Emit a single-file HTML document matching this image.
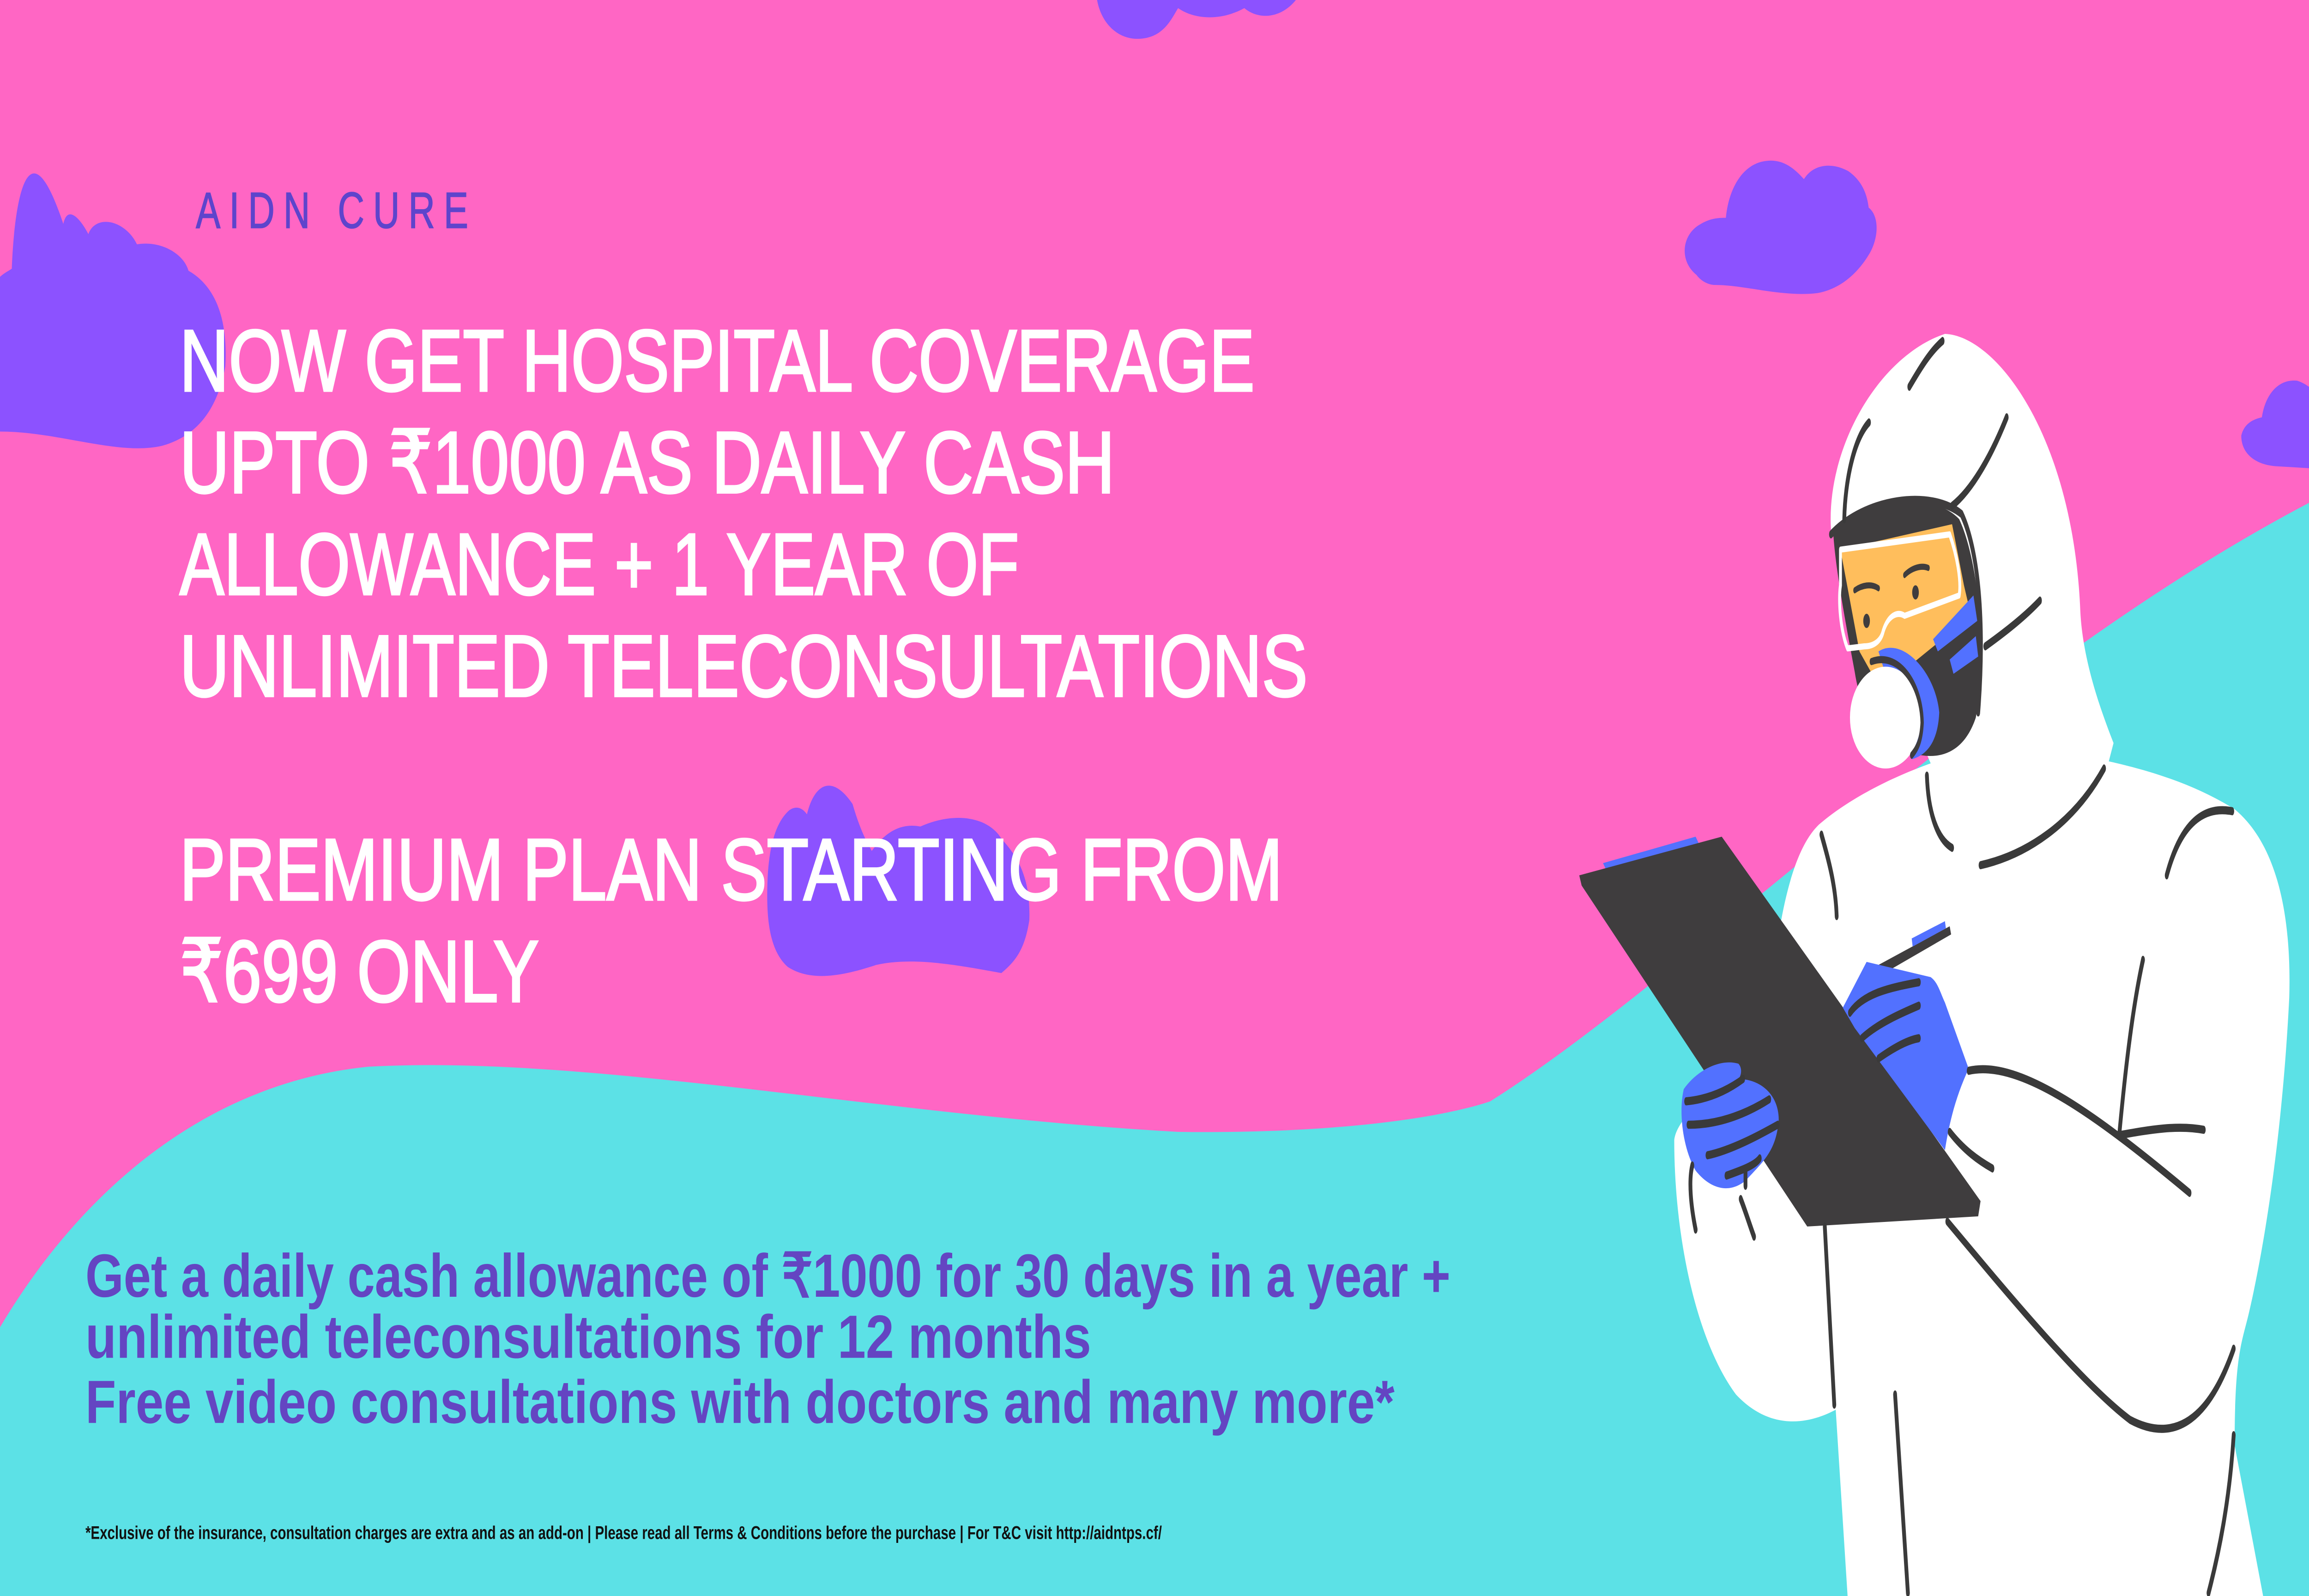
<!DOCTYPE html>
<html><head><meta charset="utf-8"><style>
html,body{margin:0;padding:0;width:100%;height:100%;overflow:hidden;background:#FF66C4}
svg{display:block;position:fixed;left:0;top:0;width:100vw;height:100vh}
</style></head><body>
<svg viewBox="0 0 1568 784" preserveAspectRatio="none" xmlns="http://www.w3.org/2000/svg">
<rect width="1568" height="784" fill="#FF66C4"/>
<path d="M745,0 C748,12 760,20 775,19 C790,18 795,10 800,4 C812,10 830,10 845,4 C855,10 870,9 880,0 Z" fill="#8C52FF"/>
<path d="M0,212 L0,136 C3,134 6,133 8,132 C10,95 20,60 43,110 C46,100 55,108 60,115 C65,105 85,108 93,120 C110,118 125,125 128,133 C145,140 155,155 153,180 C148,200 135,214 110,219 C80,224 40,212 0,212 Z" fill="#8C52FF"/>
<path d="M521,440 C521,420 525,405 536,398 C542,395 546,398 548,400 C553,385 565,380 579,395 C585,410 590,415 592,418 C600,410 610,404 625,406 C650,398 672,402 680,412 C690,420 700,430 699,452 C696,466 690,472 680,478 C650,474 620,470 595,474 C570,480 550,482 535,475 C524,468 521,455 521,440 Z" fill="#8C52FF"/>
<path d="M1152,135 C1140,128 1142,115 1155,110 C1162,107 1168,107 1172,107 C1174,92 1184,80 1200,79 C1212,78 1220,84 1225,88 C1232,80 1245,80 1255,84 C1265,89 1268,96 1269,102 C1276,106 1276,116 1270,124 C1262,134 1250,142 1234,144 C1210,146 1185,140 1165,140 C1160,140 1155,138 1152,135 Z" fill="#8C52FF"/>
<path d="M1568,230 L1545,229 C1530,228 1522,222 1522,214 C1524,208 1530,206 1536,205 C1538,195 1546,186 1560,187 C1564,188 1566,189 1568,190 Z" fill="#8C52FF"/>
<path d="M0,652 C55,585 140,532 250,524 C400,518 600,548 800,556 C900,557 975,550 1012,541 C1150,478 1350,330 1568,247 L1568,784 L0,784 Z" fill="#5CE1E6"/>

<text x="133" y="112" font-family="Liberation Sans, sans-serif" font-size="25" fill="#5E44CC" stroke="#5E44CC" stroke-width="0.4" textLength="189" lengthAdjust="spacing" letter-spacing="4">AIDN CURE</text>
<g font-family="Liberation Sans, Noto Sans CJK SC, sans-serif" font-size="43" fill="#ffffff" stroke="#ffffff" stroke-width="1">
<text x="122" y="192" textLength="730" lengthAdjust="spacingAndGlyphs">NOW GET HOSPITAL COVERAGE</text>
<text x="122" y="242" textLength="635" lengthAdjust="spacingAndGlyphs">UPTO ₹1000 AS DAILY CASH</text>
<text x="122" y="292" textLength="570" lengthAdjust="spacingAndGlyphs">ALLOWANCE + 1 YEAR OF</text>
<text x="122" y="342" textLength="766" lengthAdjust="spacingAndGlyphs">UNLIMITED TELECONSULTATIONS</text>
<text x="122" y="442" textLength="749" lengthAdjust="spacingAndGlyphs">PREMIUM PLAN STARTING FROM</text>
<text x="122" y="492" textLength="244" lengthAdjust="spacingAndGlyphs">₹699 ONLY</text>
</g>
<g font-family="Liberation Sans, Noto Sans CJK SC, sans-serif" font-weight="bold" font-size="30" fill="#6445C2">
<text x="58" y="637" textLength="927" lengthAdjust="spacingAndGlyphs">Get a daily cash allowance of ₹1000 for 30 days in a year +</text>
<text x="58" y="667" textLength="683" lengthAdjust="spacingAndGlyphs">unlimited teleconsultations for 12 months</text>
<text x="58" y="699" textLength="889" lengthAdjust="spacingAndGlyphs">Free video consultations with doctors and many more*</text>
</g>
<text x="58" y="756" font-family="Liberation Sans, sans-serif" font-weight="bold" font-size="9" fill="#111" textLength="731" lengthAdjust="spacingAndGlyphs">*Exclusive of the insurance, consultation charges are extra and as an add-on | Please read all Terms &amp; Conditions before the purchase | For T&amp;C  visit http://aidntps.cf/</text>

<g transform="translate(1066,0) scale(0.3225,0.5)" stroke-linecap="round" stroke-linejoin="round">
<path d="M550,520 C540,440 650,350 790,328 C900,330 1060,430 1075,600 C1080,650 1120,700 1145,730 L1135,748 C1250,760 1330,775 1400,795 C1490,830 1520,900 1515,980 C1500,1120 1460,1230 1430,1290 C1415,1320 1400,1330 1400,1420 L1460,1568 L585,1568 L560,1385 C500,1400 420,1405 350,1370 C270,1320 220,1220 220,1120 C225,1100 280,1080 420,1000 C440,880 480,830 525,810 C600,780 700,760 760,750 Z" fill="#ffffff"/>
<path d="M555,525 C600,490 760,480 820,510 C860,550 880,640 855,705 C830,740 780,745 740,742 C690,745 620,720 600,660 C580,610 560,560 555,525 Z" fill="#3F3D3E"/>
<path d="M570,540 L805,515 L830,575 L845,605 L700,660 L640,665 L610,640 Z" fill="#FFBE5C"/>
<path d="M570,540 L800,525 C815,545 825,570 820,585 L705,605 C690,600 670,605 660,620 C655,630 640,635 620,635 L585,637 C570,620 565,590 570,575 Z" fill="none" stroke="#ffffff" stroke-width="6"/>
<path d="M765,628 L850,585 L858,610 L775,640 Z M800,648 L855,625 L860,645 L808,662 Z" fill="#5271FF"/>
<path d="M650,640 C700,625 770,660 778,700 C775,730 750,742 720,746 Z" fill="#5271FF"/>
<ellipse cx="665" cy="705" rx="75" ry="50" fill="#ffffff"/>
<path d="M635,650 C690,640 740,670 742,710 C740,728 732,735 720,742" fill="none" stroke="#3F3D3E" stroke-width="7"/>
<path d="M600,580 C615,575 635,573 650,578 M705,565 C720,558 740,555 755,558" fill="none" stroke="#3F3D3E" stroke-width="6"/>
<circle cx="625" cy="610" r="7" fill="#3F3D3E"/><circle cx="728" cy="582" r="7" fill="#3F3D3E"/>
<path d="M550,525 C620,490 760,480 825,505 C860,540 875,610 860,700" fill="none" stroke="#3F3D3E" stroke-width="8"/>
<path d="M70,848 L265,822 L275,832 L80,858 Z" fill="#5271FF"/>
<path d="M20,860 L320,822 L865,1180 L860,1195 L500,1205 L25,870 Z" fill="#3F3D3E"/>
<path d="M650,948 L800,910 L803,918 L655,958 Z" fill="#3F3D3E"/>
<path d="M720,922 L790,905 L792,912 L722,930 Z" fill="#5271FF"/>
<path d="M575,990 L625,945 L760,960 C775,965 780,975 790,985 L840,1050 C815,1075 800,1100 790,1130 L600,1010 Z" fill="#5271FF"/>
<path d="M240,1070 C270,1050 320,1040 355,1045 C365,1050 360,1058 355,1060 C400,1060 440,1075 440,1100 C435,1130 410,1140 370,1160 C330,1175 290,1165 265,1150 C240,1130 228,1095 240,1070 Z" fill="#5271FF"/>
<g fill="none" stroke="#3A3A3A" stroke-width="8">
<path d="M590,995 C620,975 680,970 735,965 M615,1020 C650,1005 700,995 735,988 M650,1040 C680,1030 710,1022 735,1020"/>
<path d="M245,1082 C290,1080 330,1072 365,1060 M250,1105 C320,1105 380,1092 420,1080 M290,1135 C340,1130 400,1115 438,1105 M330,1155 C360,1150 390,1145 400,1138 M370,1150 L370,1165"/>
<path d="M715,380 C740,360 760,345 785,335 M578,510 C580,470 600,430 630,415 M805,497 C850,480 890,445 920,410 M875,635 C920,620 960,605 990,590"/>
<path d="M752,762 C755,800 775,825 805,833 M865,850 C960,840 1060,810 1125,755"/>
<path d="M530,820 C545,845 560,870 562,900 M1257,860 C1280,820 1320,790 1395,797"/>
<path d="M1207,943 C1185,990 1170,1050 1157,1115 M1160,1115 C1220,1110 1280,1105 1335,1110 M840,1052 C950,1040 1120,1100 1305,1172 M800,1112 C830,1130 860,1140 890,1148"/>
<path d="M795,1200 C920,1270 1080,1360 1180,1395 C1280,1420 1350,1390 1398,1325"/>
<path d="M537,1205 L557,1380 M685,1370 L712,1565 M1398,1410 C1390,1470 1370,1520 1345,1565 M258,1145 C250,1160 255,1185 265,1208 M360,1178 C370,1190 380,1205 388,1215"/>
</g>
</g>
</svg>
</body></html>
